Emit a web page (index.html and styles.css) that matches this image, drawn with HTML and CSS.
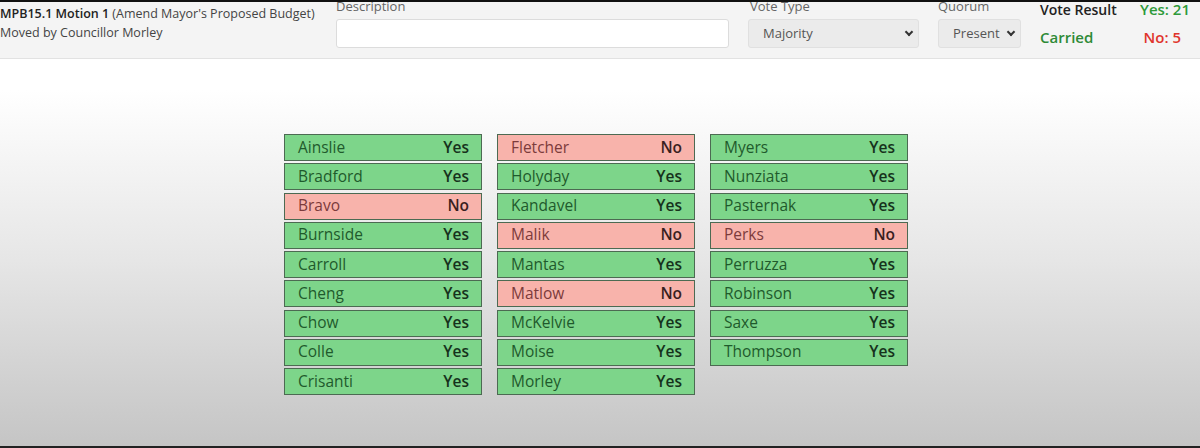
FILE: index.html
```html
<!DOCTYPE html>
<html>
<head>
<meta charset="UTF-8">
<title>Vote Board</title>
<link rel="stylesheet" href="styles.css">
</head>
<body>
<div class="topbar"></div>
<header class="motion">
	<div class="motion-title">
		<div><b>MPB15.1 Motion 1</b> (Amend Mayor's Proposed Budget)</div>
		<div>Moved by Councillor Morley</div>
	</div>
	<div class="field desc">
		<label>Description</label>
		<div class="textbox"></div>
	</div>
	<div class="field vtype">
		<label>Vote Type</label>
		<div class="select">Majority <span class="chev"></span></div>
	</div>
	<div class="field quorum">
		<label>Quorum</label>
		<div class="select">Present <span class="chev"></span></div>
	</div>
	<div class="result">
		<span class="res-label">Vote Result</span>
		<span class="yes-count">Yes: 21</span>
		<span class="carried">Carried</span>
		<span class="no-count">No: 5</span>
	</div>
</header>

<main class="board">
	<div class="col">
		<div class="vote yes"><span>Ainslie</span><b>Yes</b></div>
		<div class="vote yes"><span>Bradford</span><b>Yes</b></div>
		<div class="vote no"><span>Bravo</span><b>No</b></div>
		<div class="vote yes"><span>Burnside</span><b>Yes</b></div>
		<div class="vote yes"><span>Carroll</span><b>Yes</b></div>
		<div class="vote yes"><span>Cheng</span><b>Yes</b></div>
		<div class="vote yes"><span>Chow</span><b>Yes</b></div>
		<div class="vote yes"><span>Colle</span><b>Yes</b></div>
		<div class="vote yes"><span>Crisanti</span><b>Yes</b></div>
	</div>
	<div class="col">
		<div class="vote no"><span>Fletcher</span><b>No</b></div>
		<div class="vote yes"><span>Holyday</span><b>Yes</b></div>
		<div class="vote yes"><span>Kandavel</span><b>Yes</b></div>
		<div class="vote no"><span>Malik</span><b>No</b></div>
		<div class="vote yes"><span>Mantas</span><b>Yes</b></div>
		<div class="vote no"><span>Matlow</span><b>No</b></div>
		<div class="vote yes"><span>McKelvie</span><b>Yes</b></div>
		<div class="vote yes"><span>Moise</span><b>Yes</b></div>
		<div class="vote yes"><span>Morley</span><b>Yes</b></div>
	</div>
	<div class="col">
		<div class="vote yes"><span>Myers</span><b>Yes</b></div>
		<div class="vote yes"><span>Nunziata</span><b>Yes</b></div>
		<div class="vote yes"><span>Pasternak</span><b>Yes</b></div>
		<div class="vote no"><span>Perks</span><b>No</b></div>
		<div class="vote yes"><span>Perruzza</span><b>Yes</b></div>
		<div class="vote yes"><span>Robinson</span><b>Yes</b></div>
		<div class="vote yes"><span>Saxe</span><b>Yes</b></div>
		<div class="vote yes"><span>Thompson</span><b>Yes</b></div>
	</div>
</main>
<div class="bottombar"></div>
</body>
</html>
```

FILE: styles.css
```css
html, body {
	margin : 0;
	height : 448px;
	overflow : hidden;
}
body {
	font-family : "Open Sans", "Liberation Sans", sans-serif;
	color : #333;
	background : linear-gradient(to bottom, #ffffff 0px, #ffffff 90px, #e6e6e6 260px, #c5c5c5 445px);
	position : relative;
}
.topbar {
	height : 2px;
	background : #111;
}
.bottombar {
	position : absolute;
	left : 0;
	right : 0;
	bottom : 0;
	height : 2px;
	background : #222;
}

/* header */
.motion {
	display : flex;
	height : 56px;
	background : #f4f4f4;
	border-bottom : 1px solid #e2e2e2;
	overflow : hidden;
}
.motion-title {
	width : 336px;
	font-size : 12.5px;
	line-height : 19px;
	padding-top : 2px;
	color : #444;
}
.motion-title b {
	font-weight : 600;
	color : #222;
}
.field label {
	display : block;
	font-size : 13px;
	line-height : 16px;
	margin-top : -4px;
	height : 21px;
	color : #666;
}
.desc {
	width : 393px;
}
.textbox {
	height : 29px;
	box-sizing : border-box;
	background : #fff;
	border : 1px solid #dcdcdc;
	border-radius : 3px;
}
.vtype {
	margin-left : 19px;
	width : 171px;
}
.vtype label {
	padding-left : 2px;
}
.quorum {
	margin-left : 19px;
	width : 83px;
}
.select {
	height : 29px;
	box-sizing : border-box;
	padding : 0 6px 0 14px;
	background : #ebebeb;
	border : 1px solid #e0e0e0;
	border-radius : 3px;
	font-size : 13px;
	line-height : 27px;
	color : #555;
	display : flex;
	justify-content : space-between;
	align-items : center;
}
.chev {
	width : 4px;
	height : 4px;
	border-right : 2px solid #333;
	border-bottom : 2px solid #333;
	transform : rotate(45deg);
	margin-top : -3px;
}
.result {
	margin-left : 19px;
	width : 150px;
	display : grid;
	grid-template-columns : 1fr auto;
	grid-template-rows : 15px 40px;
	align-items : center;
	font-weight : 600;
	line-height : 15px;
}
.res-label {
	font-size : 14px;
	color : #222;
}
.yes-count {
	font-size : 15px;
	color : #2e9a3a;
	justify-self : end;
}
.carried {
	font-size : 15px;
	color : #2e8a36;
}
.no-count {
	font-size : 15px;
	color : #e0342c;
	justify-self : end;
	padding-right : 9px;
}

/* vote board */
.board {
	display : flex;
	justify-content : center;
	gap : 15px;
	padding-top : 75px;
	margin-left : -8px;
}
.col {
	width : 198px;
	display : flex;
	flex-direction : column;
	gap : 2.25px;
}
.vote {
	height : 27px;
	box-sizing : border-box;
	border : 1px solid #4c6a52;
	display : flex;
	justify-content : space-between;
	align-items : center;
	padding : 0 12px 2px 13px;
	font-size : 15.5px;
}
.vote.yes {
	background : #7dd58a;
	color : #1f5a2c;
}
.vote.yes b {
	color : #16321c;
}
.vote.no {
	background : #f8b3ab;
	color : #7c3b3b;
}
.vote.no b {
	color : #3a1f1f;
}
.vote b {
	font-weight : 600;
}
```
